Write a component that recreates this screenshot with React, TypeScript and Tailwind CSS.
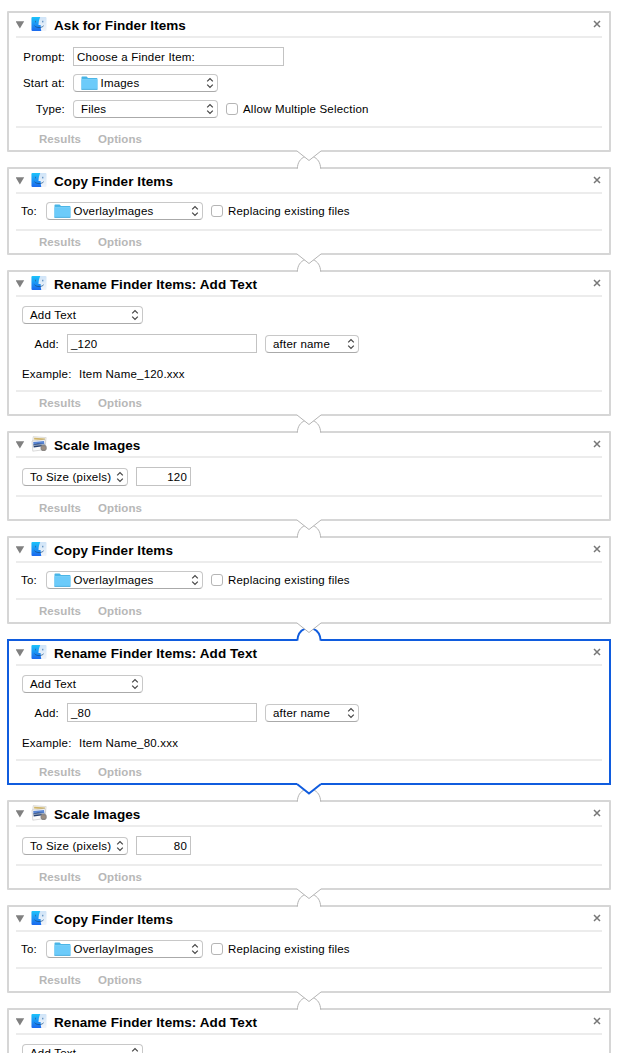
import React from "react";

function FinderIcon() {
  return (
    <svg width="16" height="16" viewBox="0 0 16 16" className="-mt-[1px] block shrink-0">
      <defs>
        <linearGradient id="finderBlue" x1="0" y1="0" x2="0" y2="1">
          <stop offset="0" stopColor="#1cc3fb" />
          <stop offset="1" stopColor="#1b68ee" />
        </linearGradient>
        <linearGradient id="finderPale" x1="0" y1="0" x2="0" y2="1">
          <stop offset="0" stopColor="#cfe4f8" />
          <stop offset="1" stopColor="#f3f5f9" />
        </linearGradient>
      </defs>
      <rect x="0.5" y="1" width="15" height="14" rx="1" fill="url(#finderPale)" />
      <path d="M1.5 1H9.2C8.1 3.5 7.6 6 7.5 9H9.6C9.6 11.2 9.8 13 10.3 15H1.5Q.5 15 .5 14V2Q.5 1 1.5 1Z" fill="url(#finderBlue)" />
      <path d="M4.5 4.8V6.4M11.8 4.8V6.4" stroke="#2a6aa8" strokeWidth="0.9" />
      <path d="M3.6 9.8C5.8 12.2 10.3 12.2 12.6 9.8" fill="none" stroke="#17508c" strokeWidth="0.8" />
    </svg>
  );
}

function ScaleIcon() {
  return (
    <svg width="16" height="16" viewBox="0 0 16 16" className="-mt-[1px] block shrink-0">
      <path d="M2.2 0.6L15.2 1.6L14.4 9L1.4 8Z" fill="#f4f2ea" stroke="#c5c5c5" strokeWidth="0.5" />
      <path d="M3.2 1.8L14 2.6L13.8 4.2L3.1 3.5Z" fill="#cfb469" />
      <path d="M1 5.1L14 3.7L15.2 13.4L1.8 15.2Z" fill="#fbfbfb" stroke="#b9b9b9" strokeWidth="0.5" />
      <path d="M2.2 6L13 4.9L13.5 8.2L2.5 9.5Z" fill="#5a86d4" />
      <path d="M2.4 8.5L7 7.4L13.4 7.9L13.7 9.9L2.7 11.4Z" fill="#26406f" />
      <path d="M2.6 9.4L13.5 8.4" stroke="#dfe9f5" strokeWidth="0.7" />
      <circle cx="12.6" cy="11.9" r="3.1" fill="#8b8784" />
      <path d="M10.8 11.2H14.4M10.8 12.8H14.4" stroke="#b39a83" strokeWidth="0.7" />
    </svg>
  );
}

function FolderIcon() {
  return (
    <svg width="17" height="14" viewBox="0 0 17 14" className="mr-[3px] -ml-[0.5px] block shrink-0">
      <path d="M.5 1.2Q.5.5 1.2.5H5.6L7 2H15.6Q16.4 2 16.4 2.8V13.5H.5Z" fill="#47b4e6" />
      <path d="M.5 3.6H16.4V13.2H.5Z" fill="#6ccbfa" />
      <path d="M.5 3.4H16.4" stroke="#8bd9fd" strokeWidth="0.7" />
      <path d="M.5 13.4H16.4" stroke="#44aadb" strokeWidth="0.8" />
    </svg>
  );
}

function Popup({ className, folder, children }: { className: string; folder?: boolean; children: React.ReactNode }) {
  return (
    <div
      className={`flex h-[18px] shrink-0 items-center rounded-[4px] border border-[#c8c8c8] border-b-[#aaaaaa] bg-white pr-[3px] pl-[7px] ${className}`}
    >
      {folder && <FolderIcon />}
      <span>{children}</span>
      <svg width="8" height="12" viewBox="0 0 8 12" className="ml-auto block shrink-0">
        <path d="M1.2 4.3L4 1.5L6.8 4.3M1.2 7.7L4 10.5L6.8 7.7" fill="none" stroke="#444444" strokeWidth="1.2" />
      </svg>
    </div>
  );
}

function Field({ className, children }: { className: string; children: React.ReactNode }) {
  return (
    <div className={`flex h-[19px] shrink-0 items-center border border-[#c3c3c3] bg-white px-[3px] ${className}`}>
      {children}
    </div>
  );
}

function Check({ className, children }: { className: string; children: React.ReactNode }) {
  return (
    <label className={`flex items-center ${className}`}>
      <span className="mr-[5px] size-[12px] rounded-[3px] border border-[#b5b5b5] bg-white" />
      {children}
    </label>
  );
}

function Connector({ above, below }: { above: boolean; below: boolean }) {
  return (
    <svg width="24" height="19" viewBox="0 0 24 19" className="absolute bottom-[-19px] left-[288px] z-10 block overflow-visible">
      <rect width="24" height="19" fill="#ffffff" />
      <path
        d="M.3 18.8C.6 12.5 3.2 8.6 8 6.6H16C20.8 8.6 23.4 12.5 23.7 18.8"
        fill="none"
        stroke={below ? "#105cde" : "#b4b4b4"}
        strokeWidth={below ? 2 : 1}
      />
      <path d="M0 0H24V1L12 10.5L0 1Z" fill="#ffffff" />
      <path
        d="M0 1L12 10.5L24 1"
        fill="none"
        stroke={above ? "#105cde" : "#b4b4b4"}
        strokeWidth={above ? 2 : 1}
      />
    </svg>
  );
}

type CardProps = {
  title: string;
  height: string;
  icon?: "finder" | "scale";
  selected?: boolean;
  nextSelected?: boolean;
  children: React.ReactNode;
};

function Card({ title, height, icon = "finder", selected = false, nextSelected = false, children }: CardProps) {
  return (
    <section
      className={`relative flex w-[604px] shrink-0 flex-col border-2 bg-white ${selected ? "border-[#105cde]" : "rounded-[1px] border-[#d6d6d6]"} ${height}`}
    >
      <header className="mx-[7px] flex h-[25px] shrink-0 items-center border-b-2 border-[#ececec]">
        <svg width="9" height="8" viewBox="0 0 9 8" className="mr-[6px] block shrink-0">
          <path d="M-.4 .2H8.2L3.9 7.6Z" fill="#808080" className="overflow-visible" />
        </svg>
        {icon === "finder" ? <FinderIcon /> : <ScaleIcon />}
        <h2 className="mt-[2px] ml-[7px] text-[13.5px] leading-[16px] font-bold tracking-[0.07px] whitespace-nowrap">{title}</h2>
        <svg width="8" height="8" viewBox="0 0 8 8" className="-mt-[1px] mr-[1px] ml-auto block">
          <path d="M1 1L7 7M7 1L1 7" stroke="#777777" strokeWidth="1.5" />
        </svg>
      </header>
      <div className="flex-1">{children}</div>
      <footer className="mx-[7px] flex h-[24px] shrink-0 items-center gap-[17px] border-t-2 border-[#ececec] pl-[23px] text-[11.5px] font-bold tracking-[0.07px] text-[#b7b7b7]">
        <span>Results</span>
        <span>Options</span>
      </footer>
      <Connector above={selected} below={nextSelected} />
    </section>
  );
}

function AskCard() {
  return (
    <Card title="Ask for Finder Items" height="h-[141px]">
      <div className="mt-[9px] flex items-center">
        <span className="w-[56px] text-right">Prompt:</span>
        <Field className="ml-[8px] w-[211px]">Choose a Finder Item:</Field>
      </div>
      <div className="mt-[8px] flex items-center">
        <span className="w-[56px] text-right">Start at:</span>
        <Popup className="ml-[8px] w-[145px]" folder>Images</Popup>
      </div>
      <div className="mt-[8px] flex items-center">
        <span className="w-[56px] text-right">Type:</span>
        <Popup className="ml-[8px] w-[145px]">Files</Popup>
        <Check className="ml-[8px]">Allow Multiple Selection</Check>
      </div>
    </Card>
  );
}

function CopyCard({ nextSelected }: { nextSelected?: boolean }) {
  return (
    <Card title="Copy Finder Items" height="h-[88px]" nextSelected={nextSelected}>
      <div className="mt-[8px] flex items-center">
        <span className="w-[28px] text-right">To:</span>
        <Popup className="ml-[9px] w-[157px]" folder>OverlayImages</Popup>
        <Check className="ml-[8px]">Replacing existing files</Check>
      </div>
    </Card>
  );
}

function RenameCard({ suffix, selected }: { suffix: string; selected?: boolean }) {
  return (
    <Card title="Rename Finder Items: Add Text" height="h-[146px]" selected={selected}>
      <div className="mt-[9px] flex pl-[13px]">
        <Popup className="w-[121px]">Add Text</Popup>
      </div>
      <div className="mt-[10px] flex items-center">
        <span className="w-[50px] text-right">Add:</span>
        <Field className="ml-[8px] w-[190px]">{suffix}</Field>
        <Popup className="ml-[8px] w-[94px]">after name</Popup>
      </div>
      <div className="mt-[12px] flex h-[18px] items-center pl-[13px]">
        <span className="w-[57px]">Example:</span>
        <span>Item Name{suffix}.xxx</span>
      </div>
    </Card>
  );
}

function ScaleCard({ size }: { size: string }) {
  return (
    <Card title="Scale Images" height="h-[90px]" icon="scale">
      <div className="mt-[9px] flex items-center pl-[13px]">
        <Popup className="w-[106px]">To Size (pixels)</Popup>
        <Field className="ml-[8px] w-[55px] justify-end">{size}</Field>
      </div>
    </Card>
  );
}

export default function App() {
  return (
    <main className="flex h-[1053px] w-[618px] flex-col gap-[15px] overflow-hidden bg-white pt-[11px] pl-[7px] font-['Liberation_Sans',Arial,sans-serif] text-[11.5px] leading-[14px] tracking-[0.2px] whitespace-nowrap text-black">
      <AskCard />
      <CopyCard />
      <RenameCard suffix="_120" />
      <ScaleCard size="120" />
      <CopyCard nextSelected />
      <RenameCard suffix="_80" selected />
      <ScaleCard size="80" />
      <CopyCard />
      <RenameCard suffix="_80" />
    </main>
  );
}
